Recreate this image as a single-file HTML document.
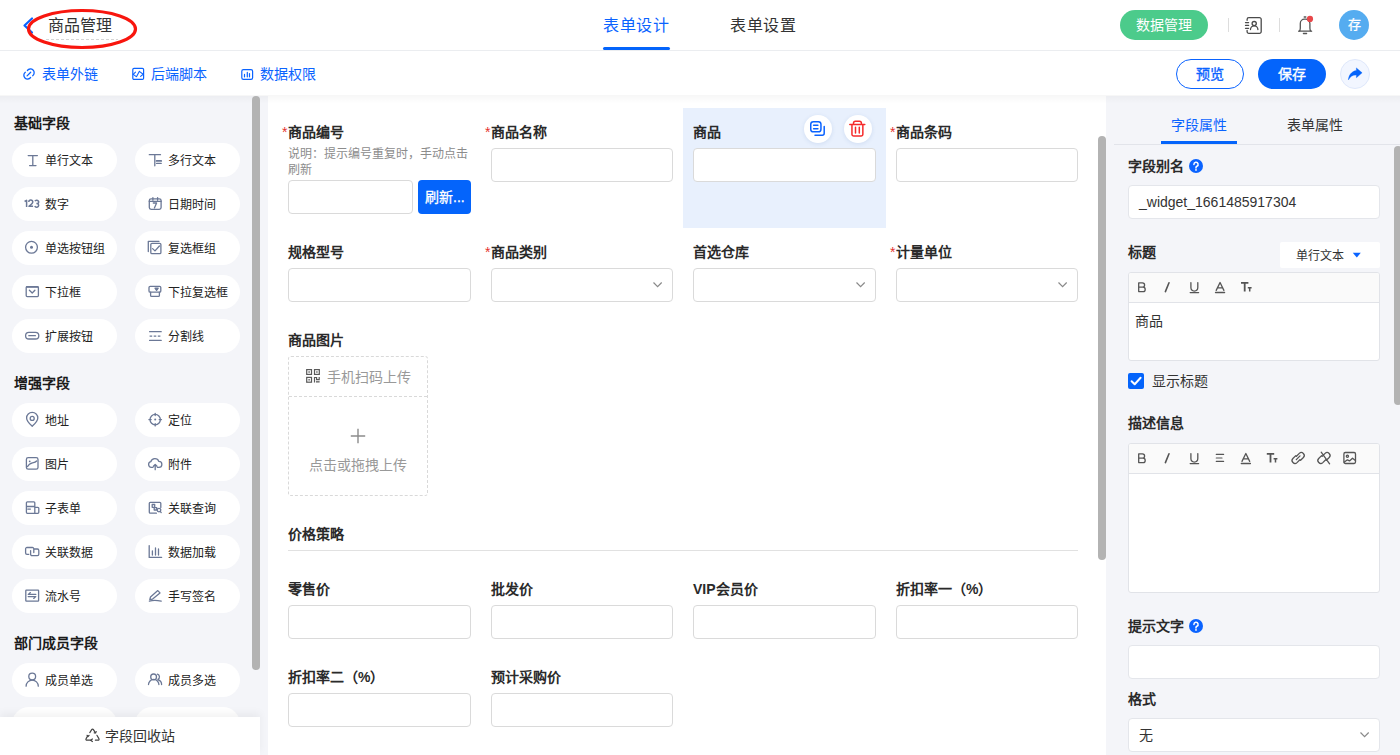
<!DOCTYPE html>
<html lang="zh-CN"><head><meta charset="utf-8">
<style>
*{box-sizing:border-box;margin:0;padding:0}
html,body{width:1400px;height:755px;overflow:hidden;background:#fff;font-family:"Liberation Sans",sans-serif;color:#333}
.a{position:absolute}
svg{position:absolute;overflow:visible}
#hdr{left:0;top:0;width:1400px;height:51px;background:#fff;border-bottom:1px solid #ebedf0}
#tb{left:0;top:51px;width:1400px;height:45px;background:#fff}
#side{left:0;top:96px;width:268px;height:659px;background:#f4f5f9}
#canvas{left:268px;top:96px;width:838px;height:659px;background:#fff}
#rp{left:1106px;top:96px;width:294px;height:659px;background:#f4f5f9}
.shadowtop{left:0;top:95px;width:1400px;height:9px;background:linear-gradient(rgba(0,0,0,.035),rgba(0,0,0,.01) 60%,rgba(0,0,0,0))}
.t{position:absolute;white-space:nowrap}
.tab{font-size:16px;line-height:40px;height:40px;letter-spacing:0.5px}
.tl{font-size:14px;line-height:40px;height:40px;color:#0a63ff}
.pill{position:absolute;height:30px;border-radius:15px;font-size:14px;line-height:30px;text-align:center}
.sbt{font-size:14px;font-weight:bold;line-height:40px;color:#1b1b1b}
.fb{position:absolute;width:105px;height:34px;border-radius:17px;background:#fff}
.fb span{position:absolute;left:33px;top:1px;font-size:12px;line-height:34px;color:#222;white-space:nowrap}
.fb svg{left:14px;top:11px}
.lbl{position:absolute;font-size:14px;font-weight:bold;line-height:40px;color:#2a2a2a;white-space:nowrap}
.lbl i{font-style:normal;color:#e5322d;font-weight:normal;position:absolute;left:-6px;top:0px}
.inp{position:absolute;height:34px;border:1px solid #dadada;border-radius:4px;background:#fff}
.scroll{position:absolute;width:8px;border-radius:4px;background:#b3b3b3}
</style></head><body>
<!-- header -->
<div id="hdr" class="a"></div>
<div id="tb" class="a"></div>
<div id="side" class="a"></div>
<div id="canvas" class="a"></div>
<div id="rp" class="a"></div>
<div class="a shadowtop"></div>

<!-- header content -->
<svg style="left:0;top:0" width="40" height="50"><path d="M32 18.5 L24.5 25.5 L32 32.5" fill="none" stroke="#0a63ff" stroke-width="2.2" stroke-linecap="round" stroke-linejoin="round"/></svg>
<div class="t" style="left:48px;top:6px;font-size:16px;line-height:40px;color:#333">商品管理</div>
<div class="a" style="left:46px;top:39px;width:72px;height:1px;background:repeating-linear-gradient(90deg,#d6d6d6 0 3px,transparent 3px 5px)"></div>
<svg style="left:0;top:0" width="160" height="60"><ellipse cx="82" cy="29" rx="53.5" ry="18.5" fill="none" stroke="#f8160e" stroke-width="3.2"/></svg>

<div class="t tab" style="left:603px;top:6px;color:#0a63ff">表单设计</div>
<div class="a" style="left:603px;top:47px;width:67px;height:3px;border-radius:2px;background:#0464fb"></div>
<div class="t tab" style="left:730px;top:6px;color:#333">表单设置</div>

<div class="pill" style="left:1120px;top:10px;width:88px;background:#4ccb8b;color:#fff">数据管理</div>
<div class="a" style="left:1228px;top:18px;width:1px;height:14px;background:#ddd"></div>
<div class="a" style="left:1279px;top:18px;width:1px;height:14px;background:#ddd"></div>
<div class="a" style="left:1339px;top:10px;width:30px;height:30px;border-radius:15px;background:#55acf0;color:#fff;font-size:13px;line-height:30px;text-align:center;-webkit-text-stroke:0.3px #fff">存</div>

<svg style="left:1242px;top:14px" width="24" height="24"><path d="M5.1 6.3V5.4A1.8 1.8 0 0 1 6.9 3.6H17.4A1.8 1.8 0 0 1 19.2 5.4V17.6A1.8 1.8 0 0 1 17.4 19.4H6.9A1.8 1.8 0 0 1 5.1 17.6V16.4" stroke="#4a4a4a" stroke-width="1.3" fill="none" stroke-linecap="round"/><path d="M3.5 8.6H6.6M3.5 11.4H6.6M3.5 14.3H6.6" stroke="#4a4a4a" stroke-width="1.3" stroke-linecap="round"/><circle cx="12.2" cy="9.6" r="2.1" stroke="#4a4a4a" stroke-width="1.3" fill="none"/><path d="M8.5 15.6A3.7 3.7 0 0 1 15.9 15.6" stroke="#4a4a4a" stroke-width="1.3" fill="none" stroke-linecap="round"/></svg>
<svg style="left:1293px;top:12px" width="24" height="24"><path d="M11.2 5H12.8" stroke="#555" stroke-width="1.3" stroke-linecap="round"/><path d="M5.6 19.2H18.6M6.2 19.2C7 18.4 7.3 17.5 7.3 16.3V11.4A4.2 4.2 0 0 1 11.5 7.2H12.7A4.2 4.2 0 0 1 16.9 11.4V16.3C16.9 17.5 17.2 18.4 18 19.2" stroke="#555" stroke-width="1.3" fill="none" stroke-linecap="round" stroke-linejoin="round"/><path d="M10.4 21.5H13.6" stroke="#555" stroke-width="1.3" stroke-linecap="round"/><circle cx="17" cy="6.9" r="3.1" fill="#e8474a"/></svg>
<!-- toolbar content -->
<div class="t tl" style="left:42px;top:54px">表单外链</div>
<div class="t tl" style="left:151px;top:54px">后端脚本</div>
<div class="t tl" style="left:260px;top:54px">数据权限</div>
<div class="pill" style="left:1176px;top:59px;width:68px;border:1px solid #0a63ff;color:#0a63ff;line-height:29px;-webkit-text-stroke:0.35px #0a63ff">预览</div>
<div class="pill" style="left:1258px;top:59px;width:68px;background:#0464fb;color:#fff;line-height:31px;-webkit-text-stroke:0.35px #fff">保存</div>
<div class="a" style="left:1340px;top:59px;width:30px;height:30px;border-radius:15px;background:#f2f6ff;border:1px solid #dfe8fb"></div>

<svg style="left:18px;top:62px" width="22" height="22"><path d="M9.4 8.5A3.75 3.75 0 1 1 14.7 13.7M12.6 15.5A3.75 3.75 0 1 1 7.3 10.3M9.1 13.9L12.7 10.3" stroke="#0a63ff" stroke-width="1.3" fill="none" stroke-linecap="round"/></svg>
<svg style="left:127px;top:62px" width="22" height="22"><rect x="5.8" y="6.4" width="10.8" height="11" rx="1.2" stroke="#0a63ff" stroke-width="1.2" fill="none"/><path d="M8.5 10.2L6.2 12.4L9.3 14.6M9.6 14.5L12.4 9.3M13 9.9L16.2 12.3L13.6 14.4" stroke="#0a63ff" stroke-width="1.1" fill="none" stroke-linecap="round" stroke-linejoin="round"/></svg>
<svg style="left:236px;top:62px" width="22" height="22"><rect x="5.8" y="7.6" width="10.8" height="9.8" rx="1.6" stroke="#0a63ff" stroke-width="1.2" fill="none"/><path d="M8.5 12.4V14.8M11.3 10.4V14.8M13.5 11.6V14.8" stroke="#0a63ff" stroke-width="1.2" fill="none" stroke-linecap="round"/></svg>
<svg style="left:1343px;top:62px" width="24" height="24"><path d="M13.4 5.9L19.1 10.8L13.4 15.7V12.9C9.6 12.8 7.2 14.4 5.4 17.9C5.9 12.9 8.8 9.2 13.4 8.6Z" fill="#0464fb" stroke="#0464fb" stroke-width="0.4" stroke-linejoin="round"/></svg>
<!-- SIDEBAR -->
<div class="t sbt" style="left:14px;top:103px">基础字段</div>
<div class="t sbt" style="left:14px;top:363px">增强字段</div>
<div class="t sbt" style="left:14px;top:623px">部门成员字段</div>
<div class="fb" style="left:12px;top:143px"><span>单行文本</span></div>
<svg style="left:20px;top:147px" width="25" height="25" viewBox="0 0 25 25"><path d="M8.2 8.6H17.4M9.6 18.6H16M12.8 8.6V18.6" stroke="#6b7896" stroke-width="1.3" fill="none" stroke-linecap="round" stroke-linejoin="round"/></svg>
<div class="fb" style="left:135px;top:143px"><span>多行文本</span></div>
<svg style="left:142px;top:147px" width="25" height="25" viewBox="0 0 25 25"><path d="M7.3 7.7H18.5M12.8 7.7V18.8" stroke="#6b7896" stroke-width="1.3" fill="none" stroke-linecap="round" stroke-linejoin="round"/><path d="M14.6 13.9H19.2" stroke="#6b7896" stroke-width="1.8" stroke-linecap="round"/><path d="M14.6 16.4H19.2" stroke="#6b7896" stroke-width="1.3" fill="none" stroke-linecap="round" stroke-linejoin="round"/></svg>
<div class="fb" style="left:12px;top:187px"><span>数字</span></div>
<svg style="left:20px;top:191px" width="25" height="25" viewBox="0 0 25 25"><path d="M4.6 10.5L6.6 9.3V16M8.8 10.9A2 1.9 0 0 1 12.8 11C12.8 12.3 11.2 13.5 9 15.3H13.1M14.9 10.2A2 1.7 0 1 1 17 12.6H16.4M17 12.6A2 1.8 0 1 1 14.8 15" stroke="#6b7896" stroke-width="1.5" fill="none" stroke-linejoin="round"/></svg>
<div class="fb" style="left:135px;top:187px"><span>日期时间</span></div>
<svg style="left:142px;top:191px" width="25" height="25" viewBox="0 0 25 25"><rect x="7.3" y="7.8" width="11.8" height="10.6" rx="1.8" stroke="#6b7896" stroke-width="1.3" fill="none" stroke-linecap="round" stroke-linejoin="round"/><path d="M7.3 10.4H19.1M10.9 6.6V9M15.6 6.6V9M11.3 12H14.6L12.4 17" stroke="#6b7896" stroke-width="1.3" fill="none" stroke-linecap="round" stroke-linejoin="round"/></svg>
<div class="fb" style="left:12px;top:231px"><span>单选按钮组</span></div>
<svg style="left:20px;top:235px" width="25" height="25" viewBox="0 0 25 25"><circle cx="11.5" cy="12.3" r="5.9" stroke="#6b7896" stroke-width="1.3" fill="none" stroke-linecap="round" stroke-linejoin="round"/><circle cx="11.5" cy="12.3" r="1.5" fill="#6b7896"/></svg>
<div class="fb" style="left:135px;top:231px"><span>复选框组</span></div>
<svg style="left:142px;top:235px" width="25" height="25" viewBox="0 0 25 25"><path d="M6.3 16.6V6.3H17" stroke="#6b7896" stroke-width="1.3" fill="none" stroke-linecap="round" stroke-linejoin="round"/><rect x="8.8" y="8.3" width="10.1" height="10.3" rx="1.2" stroke="#6b7896" stroke-width="1.3" fill="none" stroke-linecap="round" stroke-linejoin="round"/><path d="M10.6 13.6L13 15.9L17.4 11" stroke="#6b7896" stroke-width="1.3" fill="none" stroke-linecap="round" stroke-linejoin="round"/></svg>
<div class="fb" style="left:12px;top:275px"><span>下拉框</span></div>
<svg style="left:20px;top:279px" width="25" height="25" viewBox="0 0 25 25"><rect x="6.2" y="7.6" width="12.2" height="10" rx="1" stroke="#6b7896" stroke-width="1.3" fill="none" stroke-linecap="round" stroke-linejoin="round"/><path d="M6.2 7.9H18.4" stroke="#6b7896" stroke-width="1.8"/><path d="M9.4 11.3L12.2 14L14.9 11.3" stroke="#6b7896" stroke-width="1.3" fill="none" stroke-linecap="round" stroke-linejoin="round"/></svg>
<div class="fb" style="left:135px;top:275px"><span>下拉复选框</span></div>
<svg style="left:142px;top:279px" width="25" height="25" viewBox="0 0 25 25"><rect x="7" y="7.4" width="11.8" height="5.8" rx="1.2" stroke="#6b7896" stroke-width="1.3" fill="none" stroke-linecap="round" stroke-linejoin="round"/><path d="M8.6 13.2V16.4A1 1 0 0 0 9.6 17.4H16.4A1 1 0 0 0 17.4 16.4V13.2" stroke="#6b7896" stroke-width="1.3" fill="none" stroke-linecap="round" stroke-linejoin="round"/><path d="M13 9.2H16.2L14.6 11.4Z" fill="#6b7896" stroke="#6b7896" stroke-width="1.3" fill="none" stroke-linecap="round" stroke-linejoin="round"/></svg>
<div class="fb" style="left:12px;top:319px"><span>扩展按钮</span></div>
<svg style="left:20px;top:323px" width="25" height="25" viewBox="0 0 25 25"><rect x="5.6" y="9.4" width="13.2" height="6.6" rx="3.3" stroke="#6b7896" stroke-width="1.3" fill="none" stroke-linecap="round" stroke-linejoin="round"/><path d="M8.8 12.7H15.4" stroke="#6b7896" stroke-width="1.3" fill="none" stroke-linecap="round" stroke-linejoin="round"/></svg>
<div class="fb" style="left:135px;top:319px"><span>分割线</span></div>
<svg style="left:142px;top:323px" width="25" height="25" viewBox="0 0 25 25"><path d="M7.6 8.7H19.2M7.6 17.4H19.2" stroke="#6b7896" stroke-width="1.3" fill="none" stroke-linecap="round" stroke-linejoin="round"/><path d="M7.6 13.1H19.2" stroke="#6b7896" stroke-width="1.3" stroke-dasharray="2.6 1.5" stroke-linecap="butt"/></svg>
<div class="fb" style="left:12px;top:403px"><span>地址</span></div>
<svg style="left:20px;top:407px" width="25" height="25" viewBox="0 0 25 25"><path d="M12.2 19.2C9.5 16.6 6.6 14 6.6 10.9A5.6 5.6 0 0 1 17.8 10.9C17.8 14 14.9 16.6 12.2 19.2Z" stroke="#6b7896" stroke-width="1.3" fill="none" stroke-linecap="round" stroke-linejoin="round"/><circle cx="12.2" cy="11.4" r="2" stroke="#6b7896" stroke-width="1.3" fill="none" stroke-linecap="round" stroke-linejoin="round"/></svg>
<div class="fb" style="left:135px;top:403px"><span>定位</span></div>
<svg style="left:142px;top:407px" width="25" height="25" viewBox="0 0 25 25"><circle cx="13.2" cy="12.6" r="5.2" stroke="#6b7896" stroke-width="1.3" fill="none" stroke-linecap="round" stroke-linejoin="round"/><path d="M13.2 6.3V8.6M13.2 16.6V18.9M6.9 12.6H9.2M17.2 12.6H19.5" stroke="#6b7896" stroke-width="1.3" fill="none" stroke-linecap="round" stroke-linejoin="round"/><circle cx="13.2" cy="12.6" r="1" fill="#6b7896"/></svg>
<div class="fb" style="left:12px;top:447px"><span>图片</span></div>
<svg style="left:20px;top:451px" width="25" height="25" viewBox="0 0 25 25"><rect x="6.4" y="6.6" width="11.6" height="11.6" rx="1.8" stroke="#6b7896" stroke-width="1.3" fill="none" stroke-linecap="round" stroke-linejoin="round"/><path d="M7.6 15.6C8.8 12.8 10 12.3 12.5 11.8C14.6 11.4 15.8 11 16.6 10" stroke="#6b7896" stroke-width="1.3" fill="none" stroke-linecap="round" stroke-linejoin="round"/><circle cx="9.7" cy="10.3" r="0.9" fill="#6b7896"/></svg>
<div class="fb" style="left:135px;top:447px"><span>附件</span></div>
<svg style="left:142px;top:451px" width="25" height="25" viewBox="0 0 25 25"><path d="M10.9 16.4H9.3A2.9 2.9 0 0 1 8.8 10.7A4.3 4.3 0 0 1 16.9 10.4A3 3 0 0 1 16.8 16.4H15.4" stroke="#6b7896" stroke-width="1.3" fill="none" stroke-linecap="round" stroke-linejoin="round"/><path d="M13.2 18.7V13.6M11.4 15.3L13.2 13.5L15 15.3" stroke="#6b7896" stroke-width="1.3" fill="none" stroke-linecap="round" stroke-linejoin="round"/></svg>
<div class="fb" style="left:12px;top:491px"><span>子表单</span></div>
<svg style="left:20px;top:495px" width="25" height="25" viewBox="0 0 25 25"><path d="M14.8 12.3V7.8A1 1 0 0 0 13.8 6.8H7.4A1 1 0 0 0 6.4 7.8V17.3A1 1 0 0 0 7.4 18.3H17.8A1 1 0 0 0 18.8 17.3V13.3A1 1 0 0 0 17.8 12.3H14.8V18.3M6.4 11.5H14.8M7.8 14.1H10.4" stroke="#6b7896" stroke-width="1.3" fill="none" stroke-linecap="round" stroke-linejoin="round"/></svg>
<div class="fb" style="left:135px;top:491px"><span>关联查询</span></div>
<svg style="left:142px;top:495px" width="25" height="25" viewBox="0 0 25 25"><path d="M14.4 18.2H8.3A1 1 0 0 1 7.3 17.2V8.3A1 1 0 0 1 8.3 7.3H17.8A1 1 0 0 1 18.8 8.3V12.5" stroke="#6b7896" stroke-width="1.3" fill="none" stroke-linecap="round" stroke-linejoin="round"/><rect x="10.2" y="9.5" width="2.5" height="2.8" stroke="#6b7896" stroke-width="1.3" fill="none" stroke-linecap="round" stroke-linejoin="round"/><rect x="12.2" y="12.6" width="2.5" height="2.4" stroke="#6b7896" stroke-width="1.3" fill="none" stroke-linecap="round" stroke-linejoin="round"/><circle cx="17" cy="15.1" r="1.8" stroke="#6b7896" stroke-width="1.3" fill="none" stroke-linecap="round" stroke-linejoin="round"/><path d="M18.2 16.4L19.2 17.6" stroke="#6b7896" stroke-width="1.3" fill="none" stroke-linecap="round" stroke-linejoin="round"/></svg>
<div class="fb" style="left:12px;top:535px"><span>关联数据</span></div>
<svg style="left:20px;top:539px" width="25" height="25" viewBox="0 0 25 25"><path d="M8.8 15.3H7A1.4 1.4 0 0 1 5.6 13.9V9.9A1.4 1.4 0 0 1 7 8.5H12.4A1.4 1.4 0 0 1 13.8 9.9V13.5M10.6 11.6V15.2A1.4 1.4 0 0 0 12 16.6H17.4A1.4 1.4 0 0 0 18.8 15.2V11.4A1.4 1.4 0 0 0 17.4 10H13.8" stroke="#6b7896" stroke-width="1.3" fill="none" stroke-linecap="round" stroke-linejoin="round"/></svg>
<div class="fb" style="left:135px;top:535px"><span>数据加载</span></div>
<svg style="left:142px;top:539px" width="25" height="25" viewBox="0 0 25 25"><path d="M7.2 6.6V18.4H19.6M10.4 12V16M13.5 9V16M16.5 10V16" stroke="#6b7896" stroke-width="1.3" fill="none" stroke-linecap="round" stroke-linejoin="round"/></svg>
<div class="fb" style="left:12px;top:579px"><span>流水号</span></div>
<svg style="left:20px;top:583px" width="25" height="25" viewBox="0 0 25 25"><rect x="5.8" y="7.2" width="12.8" height="11" rx="0.6" stroke="#6b7896" stroke-width="1.3" fill="none" stroke-linecap="round" stroke-linejoin="round"/><path d="M8.3 11.4H15.8M8.2 13.6H15.8M8.3 11.4L10.4 9.6M15.8 13.6L13.7 15.4" stroke="#6b7896" stroke-width="1.3" fill="none" stroke-linecap="round" stroke-linejoin="round"/></svg>
<div class="fb" style="left:135px;top:579px"><span>手写签名</span></div>
<svg style="left:142px;top:583px" width="25" height="25" viewBox="0 0 25 25"><path d="M7.8 16.6L8.5 13.9L15.8 7.6L18 9.9L10.6 16.1Z" stroke="#6b7896" stroke-width="1.3" fill="none" stroke-linecap="round" stroke-linejoin="round"/><path d="M7.4 18.2C11 17 14.2 17 19.2 18.2" stroke="#6b7896" stroke-width="1.3" fill="none" stroke-linecap="round" stroke-linejoin="round"/></svg>
<div class="fb" style="left:12px;top:663px"><span>成员单选</span></div>
<svg style="left:20px;top:667px" width="25" height="25" viewBox="0 0 25 25"><circle cx="12.2" cy="9.6" r="3.4" stroke="#6b7896" stroke-width="1.3" fill="none" stroke-linecap="round" stroke-linejoin="round"/><path d="M6.1 19.2A6.1 6.1 0 0 1 18.3 19.2" stroke="#6b7896" stroke-width="1.3" fill="none" stroke-linecap="round" stroke-linejoin="round"/></svg>
<div class="fb" style="left:135px;top:663px"><span>成员多选</span></div>
<svg style="left:142px;top:667px" width="25" height="25" viewBox="0 0 25 25"><circle cx="11.6" cy="9.9" r="2.9" stroke="#6b7896" stroke-width="1.3" fill="none" stroke-linecap="round" stroke-linejoin="round"/><path d="M6.5 17.6A5.2 5.2 0 0 1 16.9 17.6M15.4 7.2A2.8 2.8 0 0 1 15.9 12.4M16.3 12.8A5 5 0 0 1 19.6 17.6" stroke="#6b7896" stroke-width="1.3" fill="none" stroke-linecap="round" stroke-linejoin="round"/></svg>
<div class="fb" style="left:12px;top:707px"><span></span></div>
<div class="fb" style="left:135px;top:707px"><span></span></div>
<div class="scroll" style="left:252px;top:96px;height:574px"></div>
<div class="a" style="left:0;top:717px;width:260px;height:38px;background:#fff;box-shadow:0 -4px 8px rgba(0,0,0,.05)"></div>
<svg style="left:80px;top:723px" width="25" height="25" viewBox="0 0 25 25"><path d="M9.8 9.6L11.7 6.6A1 1 0 0 1 13.4 6.6L15.3 9.6M16.9 12.3L18.9 15.6A1 1 0 0 1 18.1 17.2H15.4M10.4 17.2H6.9A1 1 0 0 1 6.1 15.6L7.9 12.6" stroke="#444" stroke-width="1.2" fill="none" stroke-linecap="round"/><path d="M14.2 9.8L15.6 9.9L16.2 8.6M7.1 12.3L8 13.5L9.1 12.4M12.4 16L10.6 17.2L12.4 18.5" stroke="#444" stroke-width="1.2" fill="none" stroke-linecap="round" stroke-linejoin="round"/></svg>
<div class="t" style="left:105px;top:717px;font-size:14px;line-height:38px;color:#333">字段回收站</div>
<!-- CANVAS -->
<div class="a" style="left:683px;top:108px;width:203px;height:120px;background:#e8f0fd"></div>
<div class="lbl" style="left:288px;top:112px"><i>*</i>商品编号</div>
<div class="t" style="left:288px;top:146px;font-size:12px;line-height:16px;color:#8c8c8c;white-space:normal;width:190px">说明：提示编号重复时，手动点击<br>刷新</div>
<div class="inp" style="left:288px;top:180px;width:125px"></div>
<div class="a" style="left:418px;top:180px;width:53px;height:34px;border-radius:4px;background:#0464fb;color:#fff;font-size:14px;-webkit-text-stroke:0.3px #fff;line-height:35px;padding-left:7px;white-space:nowrap">刷新...</div>
<div class="lbl" style="left:491px;top:112px"><i>*</i>商品名称</div>
<div class="inp" style="left:491px;top:148px;width:182px"></div>
<div class="lbl" style="left:693px;top:112px">商品</div>
<div class="inp" style="left:693px;top:148px;width:183px"></div>
<div class="lbl" style="left:896px;top:112px"><i>*</i>商品条码</div>
<div class="inp" style="left:896px;top:148px;width:182px"></div>
<div class="a" style="left:804px;top:115px;width:28px;height:28px;border-radius:14px;background:#fff;box-shadow:0 1px 4px rgba(30,80,160,.12)"></div>
<div class="a" style="left:844px;top:115px;width:28px;height:28px;border-radius:14px;background:#fff;box-shadow:0 1px 4px rgba(30,80,160,.12)"></div>
<svg style="left:804px;top:115px" width="28" height="28"><rect x="6.75" y="6.75" width="10.2" height="10.1" rx="2.6" stroke="#0a63ff" stroke-width="1.5" fill="none"/><path d="M9.6 10.3H13.9M9.6 13.8H13.9" stroke="#0a63ff" stroke-width="1.5" stroke-linecap="round"/><path d="M11 20.2H18.2A2 2 0 0 0 20.2 18.2V11.6" stroke="#0a63ff" stroke-width="1.5" fill="none" stroke-linecap="round"/></svg>
<svg style="left:844px;top:115px" width="28" height="28"><path d="M5.8 9.5H20.8M9.5 9.5V8.2A2 2 0 0 1 11.5 6.2H15.4A2 2 0 0 1 17.4 8.2V9.5M7.95 9.5V19.2A1.8 1.8 0 0 0 9.75 21H17.05A1.8 1.8 0 0 0 18.85 19.2V9.5M11.5 12.2V17.9M15.3 12.2V17.9" stroke="#f52a2a" stroke-width="1.5" fill="none" stroke-linecap="round" stroke-linejoin="round"/></svg>
<div class="lbl" style="left:288px;top:232px">规格型号</div>
<div class="inp" style="left:288px;top:268px;width:183px"></div>
<div class="lbl" style="left:491px;top:232px"><i>*</i>商品类别</div>
<div class="inp" style="left:491px;top:268px;width:182px"></div>
<svg style="left:653px;top:282px" width="10" height="6"><path d="M0.5 0.5L4.6 4.6L8.7 0.5" stroke="#8a8a8a" stroke-width="1.2" fill="none"/></svg>
<div class="lbl" style="left:693px;top:232px">首选仓库</div>
<div class="inp" style="left:693px;top:268px;width:183px"></div>
<svg style="left:856px;top:282px" width="10" height="6"><path d="M0.5 0.5L4.6 4.6L8.7 0.5" stroke="#8a8a8a" stroke-width="1.2" fill="none"/></svg>
<div class="lbl" style="left:896px;top:232px"><i>*</i>计量单位</div>
<div class="inp" style="left:896px;top:268px;width:182px"></div>
<svg style="left:1058px;top:282px" width="10" height="6"><path d="M0.5 0.5L4.6 4.6L8.7 0.5" stroke="#8a8a8a" stroke-width="1.2" fill="none"/></svg>
<div class="lbl" style="left:288px;top:320px">商品图片</div>
<div class="a" style="left:288px;top:356px;width:140px;height:140px;border:1px dashed #d9d9d9;border-radius:3px"></div>
<div class="a" style="left:289px;top:396px;width:138px;height:0;border-top:1px dashed #d9d9d9"></div>
<svg style="left:302px;top:365px" width="22" height="22"><g fill="none" stroke="#595959" stroke-width="1.2"><rect x="4.7" y="4.6" width="4.8" height="4.8"/><rect x="12.5" y="4.6" width="4.8" height="4.8"/><rect x="4.7" y="12.4" width="4.8" height="4.8"/><path d="M12.5 17.6V12.5H14.6V14.6H17.2V12"/></g><g fill="#595959"><rect x="6.4" y="6.3" width="1.4" height="1.4"/><rect x="14.2" y="6.3" width="1.4" height="1.4"/><rect x="6.4" y="14.1" width="1.4" height="1.4"/><rect x="14" y="16.2" width="3.6" height="1.3"/></g></svg>
<div class="t" style="left:327px;top:357px;font-size:14px;line-height:40px;color:#999">手机扫码上传</div>
<svg style="left:350px;top:428px" width="16" height="16"><path d="M8 0.8V15.2M0.8 8H15.2" stroke="#8c8c8c" stroke-width="1.4"/></svg>
<div class="t" style="left:309px;top:445px;font-size:14px;line-height:40px;color:#999">点击或拖拽上传</div>
<div class="lbl" style="left:288px;top:514px">价格策略</div>
<div class="a" style="left:288px;top:550px;width:790px;height:1px;background:#e1e1e1"></div>
<div class="lbl" style="left:288px;top:569px">零售价</div>
<div class="inp" style="left:288px;top:605px;width:183px"></div>
<div class="lbl" style="left:491px;top:569px">批发价</div>
<div class="inp" style="left:491px;top:605px;width:182px"></div>
<div class="lbl" style="left:693px;top:569px">VIP会员价</div>
<div class="inp" style="left:693px;top:605px;width:183px"></div>
<div class="lbl" style="left:896px;top:569px">折扣率一（%）</div>
<div class="inp" style="left:896px;top:605px;width:182px"></div>
<div class="lbl" style="left:288px;top:657px">折扣率二（%）</div>
<div class="inp" style="left:288px;top:693px;width:183px"></div>
<div class="lbl" style="left:491px;top:657px">预计采购价</div>
<div class="inp" style="left:491px;top:693px;width:182px"></div>
<div class="scroll" style="left:1098px;top:136px;height:424px"></div>
<!-- RIGHT -->
<div class="t" style="left:1171px;top:105px;font-size:14px;line-height:40px;color:#0a63ff">字段属性</div>
<div class="t" style="left:1287px;top:105px;font-size:14px;line-height:40px;color:#333">表单属性</div>
<div class="a" style="left:1114px;top:144px;width:286px;height:1px;background:#e2e4ea"></div>
<div class="a" style="left:1161px;top:141px;width:76px;height:3px;background:#0464fb"></div>
<div class="lbl" style="left:1128px;top:146px">字段别名</div><svg style="left:1189px;top:159px" width="14" height="14"><circle cx="7" cy="7" r="7" fill="#0a63ff"/><path d="M4.9 5.4A2.1 2.1 0 1 1 7.9 7.3C7.3 7.6 7 8 7 8.6V9" stroke="#fff" stroke-width="1.5" fill="none" stroke-linecap="round"/><circle cx="7" cy="10.9" r="0.9" fill="#fff"/></svg>
<div class="inp" style="left:1128px;top:185px;width:252px;height:34px;border-color:#e4e6eb"></div>
<div class="t" style="left:1139px;top:182px;font-size:14px;line-height:40px;color:#333">_widget_1661485917304</div>
<div class="lbl" style="left:1128px;top:232px">标题</div>
<div class="a" style="left:1280px;top:242px;width:100px;height:26px;background:#fff;border-radius:2px"></div>
<div class="t" style="left:1296px;top:236px;font-size:12px;line-height:40px;color:#333">单行文本</div>
<svg style="left:1352px;top:252px" width="10" height="7"><path d="M0.8 0.8H8.8L4.8 5.6Z" fill="#0a63ff"/></svg>
<div class="a" style="left:1128px;top:272px;width:252px;height:89px;border:1px solid #e1e3e8;border-radius:3px;background:#fff"></div>
<div class="a" style="left:1129px;top:273px;width:250px;height:30px;background:#fafafa;border-bottom:1px solid #e1e3e8;border-radius:2px 2px 0 0"></div>
<svg style="left:1128px;top:272px" width="252" height="31"><path d="M10.7 10.8V19.6H15A2.2 2.2 0 0 0 15 15.2H10.7M10.7 15.2H14.4A2.2 2.2 0 0 0 14.4 10.8H10.7" stroke="#555" stroke-width="1.3" fill="none" stroke-linecap="round" stroke-linejoin="round"/><path d="M41 10.8L37.4 19.6" stroke="#555" stroke-width="1.6" stroke-linecap="round"/><path d="M62.9 10.6V15.6A3.45 3.45 0 0 0 69.8 15.6V10.6M62.2 20.6H70.6" stroke="#555" stroke-width="1.3" fill="none" stroke-linecap="round" stroke-linejoin="round"/><g transform="translate(-25.8 0)"><path d="M114 18.4L117.85 10.5L121.7 18.4M115.3 15.8H120.4M113.3 20.5H122.4" stroke="#555" stroke-width="1.3" fill="none" stroke-linecap="round" stroke-linejoin="round"/></g><g transform="translate(-25.8 0)"><path d="M138.8 10.9H146.2M142.5 10.9V19.6" stroke="#555" stroke-width="1.8"/><path d="M145.6 15.7H149.4M147.5 15.7V19.6" stroke="#555" stroke-width="1.5"/></g></svg>
<div class="t" style="left:1135px;top:301px;font-size:14px;line-height:40px;color:#333">商品</div>
<div class="a" style="left:1128px;top:373px;width:16px;height:16px;border-radius:2px;background:#0464fb"></div>
<svg style="left:1128px;top:373px" width="16" height="16"><path d="M3.6 8.2L6.7 11.2L12.6 4.8" stroke="#fff" stroke-width="2" fill="none" stroke-linecap="round" stroke-linejoin="round"/></svg>
<div class="t" style="left:1152px;top:361px;font-size:14px;line-height:40px;color:#333">显示标题</div>
<div class="lbl" style="left:1128px;top:403px">描述信息</div>
<div class="a" style="left:1128px;top:443px;width:252px;height:150px;border:1px solid #e1e3e8;border-radius:3px;background:#fff"></div>
<div class="a" style="left:1129px;top:444px;width:250px;height:30px;background:#fafafa;border-bottom:1px solid #e1e3e8;border-radius:2px 2px 0 0"></div>
<svg style="left:1128px;top:443px" width="252" height="31"><path d="M10.7 10.8V19.6H15A2.2 2.2 0 0 0 15 15.2H10.7M10.7 15.2H14.4A2.2 2.2 0 0 0 14.4 10.8H10.7" stroke="#555" stroke-width="1.3" fill="none" stroke-linecap="round" stroke-linejoin="round"/><path d="M41 10.8L37.4 19.6" stroke="#555" stroke-width="1.6" stroke-linecap="round"/><path d="M62.9 10.6V15.6A3.45 3.45 0 0 0 69.8 15.6V10.6M62.2 20.6H70.6" stroke="#555" stroke-width="1.3" fill="none" stroke-linecap="round" stroke-linejoin="round"/><path d="M88.3 11.4H95.6M88.3 15H94M88.3 18.4H95.6" stroke="#555" stroke-width="1.2" stroke-linecap="round"/><g transform="translate(0 0)"><path d="M114 18.4L117.85 10.5L121.7 18.4M115.3 15.8H120.4M113.3 20.5H122.4" stroke="#555" stroke-width="1.3" fill="none" stroke-linecap="round" stroke-linejoin="round"/></g><g transform="translate(0 0)"><path d="M138.8 10.9H146.2M142.5 10.9V19.6" stroke="#555" stroke-width="1.8"/><path d="M145.6 15.7H149.4M147.5 15.7V19.6" stroke="#555" stroke-width="1.5"/></g><path d="M168.4 13.3L171.3 10.4A2.9 2.9 0 0 1 175.4 14.5L172.6 17.3M171.9 16.7L169 19.6A2.9 2.9 0 0 1 164.9 15.5L167.8 12.6M168.3 16.6L172 12.9" stroke="#555" stroke-width="1.3" fill="none" stroke-linecap="round" stroke-linejoin="round"/><path d="M194.2 13.3L197.1 10.4A2.9 2.9 0 0 1 201.2 14.5L198.4 17.3M197.7 16.7L194.8 19.6A2.9 2.9 0 0 1 190.7 15.5L193.6 12.6M193.2 9.2L201.6 20.8" stroke="#555" stroke-width="1.3" fill="none" stroke-linecap="round" stroke-linejoin="round"/><rect x="215.9" y="9.5" width="11.6" height="11" rx="1.4" stroke="#555" stroke-width="1.3" fill="none" stroke-linecap="round" stroke-linejoin="round"/><circle cx="219.4" cy="13.3" r="1.1" stroke="#555" stroke-width="1.3" fill="none" stroke-linecap="round" stroke-linejoin="round"/><path d="M216.1 19.2L219.4 16.8L221.5 17.9L224.5 15.2L227.4 17.6" stroke="#555" stroke-width="1.3" fill="none" stroke-linecap="round" stroke-linejoin="round"/></svg>
<div class="lbl" style="left:1128px;top:606px">提示文字</div><svg style="left:1189px;top:619px" width="14" height="14"><circle cx="7" cy="7" r="7" fill="#0a63ff"/><path d="M4.9 5.4A2.1 2.1 0 1 1 7.9 7.3C7.3 7.6 7 8 7 8.6V9" stroke="#fff" stroke-width="1.5" fill="none" stroke-linecap="round"/><circle cx="7" cy="10.9" r="0.9" fill="#fff"/></svg>
<div class="inp" style="left:1128px;top:645px;width:252px;height:34px;border-color:#e4e6eb"></div>
<div class="lbl" style="left:1128px;top:679px">格式</div>
<div class="inp" style="left:1128px;top:718px;width:252px;height:34px;border-color:#e4e6eb"></div>
<div class="t" style="left:1139px;top:715px;font-size:14px;line-height:40px;color:#333">无</div>
<svg style="left:1360px;top:732px" width="10" height="6"><path d="M0.5 0.5L4.6 4.6L8.7 0.5" stroke="#8a8a8a" stroke-width="1.2" fill="none"/></svg>
<div class="scroll" style="left:1394px;top:146px;height:259px;width:8px"></div>
</body></html>
